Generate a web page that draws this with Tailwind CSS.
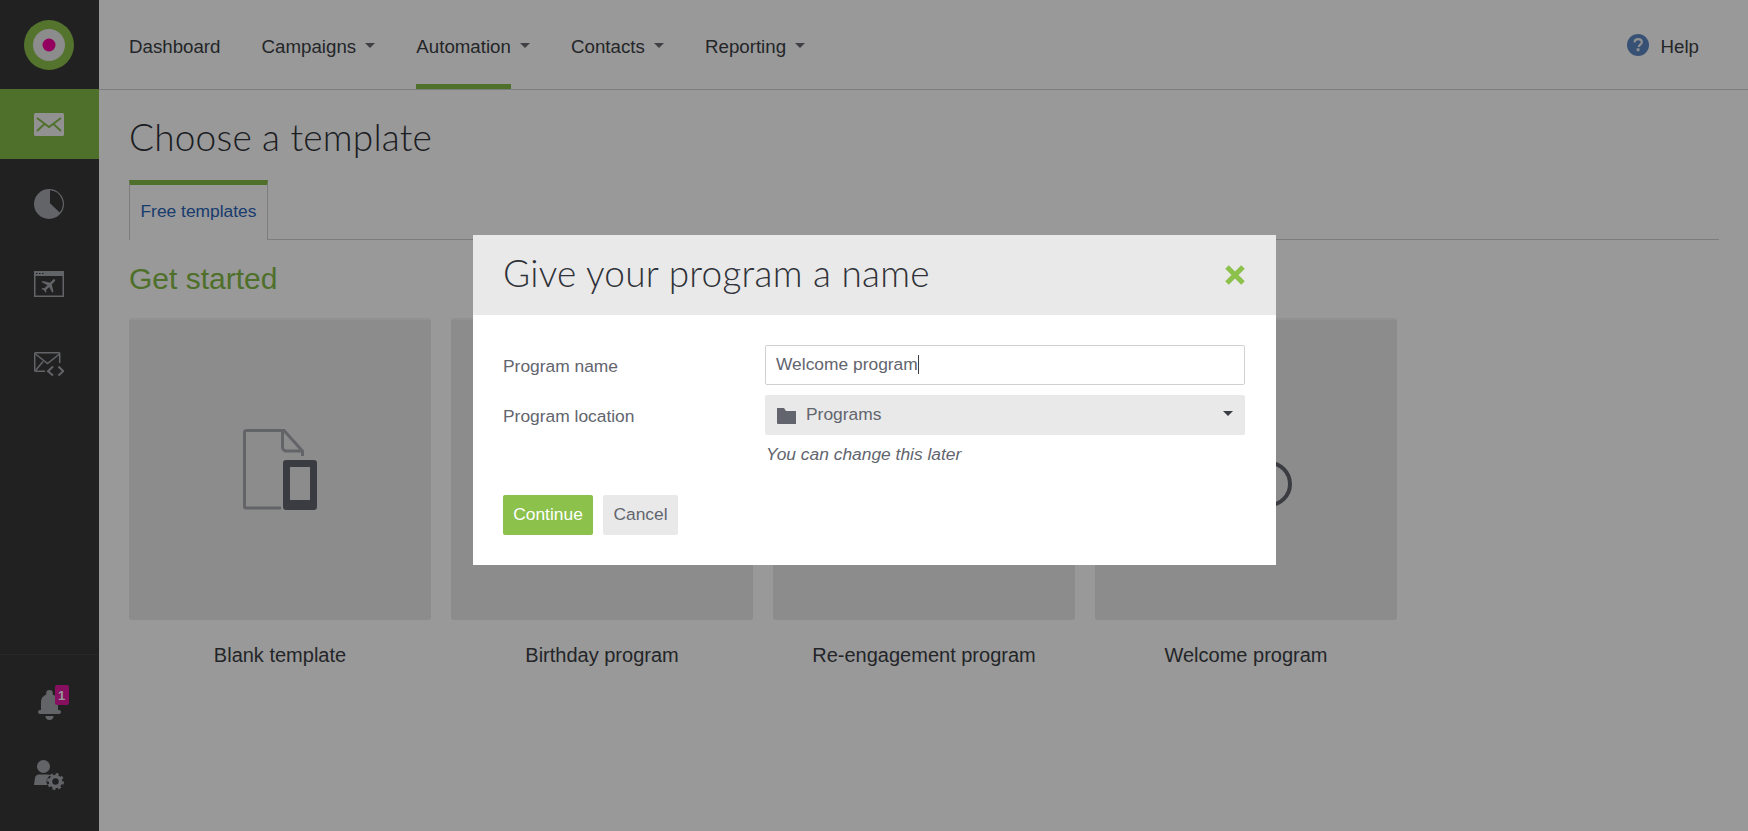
<!DOCTYPE html>
<html lang="en">
  <head>
    <meta charset="UTF-8" />
    <title>Choose a template</title>
    <script src="https://cdn.jsdelivr.net/npm/@tailwindcss/browser@4"></script>
  </head>
  <body class="h-[831px] overflow-hidden bg-white font-['Liberation_Sans',Arial,sans-serif] text-[#3b3e45]">
    <div class="flex h-[831px]">
      <!-- Sidebar -->
      <aside class="flex w-[99px] shrink-0 flex-col bg-[#383838] pr-px">
        <div class="flex h-[89px] items-center justify-center">
          <svg width="50" height="50" viewBox="0 0 50 50">
            <circle cx="25" cy="25" r="25" class="fill-[#8cc14c]" />
            <circle cx="25" cy="25" r="16" class="fill-[#e9e9e9]" />
            <circle cx="25" cy="25" r="6.500" class="fill-[#f500a0]" />
          </svg>
        </div>
        <div class="-mr-px flex h-[70px] items-center justify-center bg-[#84bb46] pr-px">
          <svg width="30" height="23" viewBox="0 0 30 23">
            <rect width="30" height="23" rx="1.500" fill="#f2f2f2" />
            <path d="M3 5l12 9 12-9M3 18l7.500-7M27 18l-7.500-7" fill="none" stroke="#84bb46" stroke-width="1.800" />
          </svg>
        </div>
        <div class="flex flex-col pt-[5px]">
          <div class="flex h-[80px] items-center justify-center">
            <svg width="30" height="30" viewBox="0 0 30 30">
              <circle cx="15" cy="15" r="15" fill="#a5a7ad" />
              <path d="M16 1.300A13.700 13.700 0 0 1 25.700 23.600L16 14.300z" fill="#383838" />
            </svg>
          </div>
          <div class="flex h-[80px] items-center justify-center">
            <svg width="30" height="26" viewBox="0 0 30 26" fill="none" stroke="#a5a7ad">
              <rect x=".75" y=".75" width="28.500" height="24.500" stroke-width="1.500" />
              <rect width="30" height="5" fill="#a5a7ad" stroke="none" />
              <path d="M2 2.500h1.500M5 2.500h1.500M8 2.500h1.500" stroke="#383838" stroke-width="1" />
              <g transform="translate(5.900 4.900) scale(.8) rotate(45 12 12)">
                <path fill="#a5a7ad" stroke="none" d="M21 16v-2l-8-5V3.500c0-.83-.67-1.500-1.500-1.500S10 2.670 10 3.500V9l-8 5v2l8-2.500V19l-2 1.500V22l3.500-1 3.500 1v-1.500L13 19v-5.500l8 2.500z" />
              </g>
            </svg>
          </div>
          <div class="flex h-[80px] items-center justify-center">
            <svg width="30" height="24" viewBox="0 0 30 24" fill="none" stroke="#a5a7ad" stroke-width="1.500">
              <path d="M11 19.250H1.700a1 1 0 0 1-1-1V1.700a1 1 0 0 1 1-1h23a1 1 0 0 1 1 1V11" />
              <path d="M1.500 2l12 9.500 12-9.500M1.500 18.500L9 9.500" />
              <path d="M19 14.500l-5 4.700 5 4.300M24.500 14.500l4.700 4.700-4.700 4.300" stroke-width="2" />
            </svg>
          </div>
        </div>
        <div class="mt-auto flex h-[177px] flex-col items-center border-t border-[#434343] pt-[35px]">
          <div class="relative h-[30px] w-[23px]">
            <svg width="23" height="30" viewBox="0 0 23 30" class="absolute left-0 top-0">
              <circle cx="11.500" cy="3.300" r="3.300" fill="#a5a7ad" />
              <path fill="#a5a7ad" d="M3 21V12C3 7 7 4 11.500 4S20 7 20 12v9z" />
              <rect y="20" width="23" height="4" rx="2" fill="#a5a7ad" />
              <path fill="#a5a7ad" d="M7.500 26h8c0 2.500-1.500 4-4 4s-4-1.500-4-4z" />
            </svg>
            <span class="absolute left-[17px] top-[-5px] flex h-[20px] w-[14px] items-center justify-center rounded-[2px] bg-[#e01a9f] text-[13px] leading-none font-bold text-white">1</span>
          </div>
          <svg width="30" height="30" viewBox="0 0 30 30" class="mt-[40px]">
            <circle cx="9.500" cy="6.500" r="6.500" fill="#a5a7ad" />
            <path fill="#a5a7ad" d="M0 25l1-7c.3-2 2-3.500 4-3.500h9c1 0 1.800.3 2.500.8-2.500 1.500-4 3.500-4 6.200 0 1.300.3 2.500 1 3.500z" />
            <circle cx="21.500" cy="21.500" r="5" fill="none" stroke="#a5a7ad" stroke-width="3.600" />
            <circle cx="21.500" cy="21.500" r="7.300" fill="none" stroke="#a5a7ad" stroke-width="2.400" stroke-dasharray="2.870 2.860" />
          </svg>
        </div>
      </aside>

      <div class="min-w-0 flex-1">
        <!-- Top nav -->
        <header class="flex h-[90px] items-start justify-between border-b border-[#d1d1d1] pl-[30px] pr-[49px]">
          <nav class="flex gap-[41.2px] text-[18.700px] text-[#3b3e45]">
            <a class="flex h-[89px] items-center pt-[5px]">Dashboard</a>
            <a class="flex h-[89px] items-center gap-[9px] pt-[5px]">Campaigns <span class="-mt-[3px] h-0 w-0 border-x-[5px] border-t-[5px] border-x-transparent border-t-[#6a6c72]"></span></a>
            <a class="relative flex h-[89px] items-center gap-[9px] pt-[5px]">Automation <span class="-mt-[3px] h-0 w-0 border-x-[5px] border-t-[5px] border-x-transparent border-t-[#6a6c72]"></span>
              <span class="absolute bottom-0 left-0 right-[19px] h-[5px] bg-[#84bb46]"></span>
            </a>
            <a class="flex h-[89px] items-center gap-[9px] pt-[5px]">Contacts <span class="-mt-[3px] h-0 w-0 border-x-[5px] border-t-[5px] border-x-transparent border-t-[#6a6c72]"></span></a>
            <a class="flex h-[89px] items-center gap-[9px] pt-[5px]">Reporting <span class="-mt-[3px] h-0 w-0 border-x-[5px] border-t-[5px] border-x-transparent border-t-[#6a6c72]"></span></a>
          </nav>
          <div class="flex h-[89px] items-center gap-[12px] text-[18.700px]">
            <svg width="22" height="22" viewBox="0 0 23 23">
              <circle cx="11.500" cy="11.500" r="11.500" class="fill-[#5d88c4]" />
              <path d="M7.800 8.800c.2-2.200 1.800-3.400 3.900-3.400 2.200 0 3.800 1.300 3.800 3.100 0 2.700-3.200 2.600-3.200 5.200" fill="none" stroke="#f1f1f1" stroke-width="2.200" />
              <rect x="10.100" y="15" width="2.900" height="2.900" fill="#f1f1f1" />
            </svg>
            <span class="pt-[5px]">Help</span>
          </div>
        </header>

        <!-- Content -->
        <main class="pl-[30px] pr-[29px]">
          <h1 class="mt-[24px] h-[46px] font-['Lato',sans-serif] text-[37px] leading-[46px] font-light tracking-[.2px] text-[#2f3238]">Choose a template</h1>
          <div class="mt-[20px] flex h-[60px] border-b border-[#d1d1d1]">
            <div class="-mb-px flex h-[60px] w-[139px] items-center justify-center border-x border-t-[5px] border-x-[#d1d1d1] border-t-[#84bb46] bg-white pb-[3px] text-[17.400px] text-[#2b64b8]">Free templates</div>
          </div>
          <h2 class="mt-[21px] h-[36px] text-[30px] leading-[36px] text-[#84bb46]">Get started</h2>
          <div class="mt-[21px] flex gap-[20px]">
            <div class="w-[302px]">
              <div class="flex h-[302px] items-start justify-center rounded-[3px] border-t-2 border-[#f2f2f2] bg-[#e9e9e9] pt-[109px]">
                <svg width="75" height="81" viewBox="0 0 75 81" fill="none">
                  <path d="M38 79H3a1.500 1.500 0 0 1-1.500-1.500V3A1.500 1.500 0 0 1 3 1.500h38L59.500 22v5" stroke="#a5a7ad" stroke-width="3" />
                  <path d="M39.500 2v16a4 4 0 0 0 4 4h16" stroke="#a5a7ad" stroke-width="3" />
                  <rect x="40" y="31" width="34" height="50" rx="3" fill="#62656e" />
                  <rect x="47" y="38" width="20" height="33" fill="#e9e9e9" />
                </svg>
              </div>
              <p class="mt-[24px] text-center text-[20px] leading-[22px]">Blank template</p>
            </div>
            <div class="w-[302px]">
              <div class="h-[302px] rounded-[3px] border-t-2 border-[#f2f2f2] bg-[#e9e9e9]"></div>
              <p class="mt-[24px] text-center text-[20px] leading-[22px]">Birthday program</p>
            </div>
            <div class="w-[302px]">
              <div class="h-[302px] rounded-[3px] border-t-2 border-[#f2f2f2] bg-[#e9e9e9]"></div>
              <p class="mt-[24px] text-center text-[20px] leading-[22px]">Re-engagement program</p>
            </div>
            <div class="w-[302px]">
              <div class="relative h-[302px] overflow-hidden rounded-[3px] border-t-2 border-[#f2f2f2] bg-[#e9e9e9]">
                <span class="absolute left-[151px] top-[141px] size-[46px] rounded-full border-[4px] border-[#62656e]"></span>
              </div>
              <p class="mt-[24px] text-center text-[20px] leading-[22px]">Welcome program</p>
            </div>
          </div>
        </main>
      </div>
    </div>

    <!-- Modal overlay -->
    <div class="fixed inset-0 bg-black/40"></div>
    <div class="fixed left-[473px] top-[235px] w-[803px] bg-white">
      <div class="flex h-[80px] items-center justify-between bg-[#e9e9e9] px-[30px]">
        <h3 class="-mt-[5px] font-['Lato',sans-serif] text-[37px] font-light tracking-[.25px] text-[#2f3238]">Give your program a name</h3>
        <svg width="22" height="22" viewBox="0 0 22 22"><path d="M3 3l16 16M19 3L3 19" stroke="#8cc14c" stroke-width="5" /></svg>
      </div>
      <div class="h-[250px] pl-[30px] pr-[31px] pt-[30px] text-[#62656e]">
        <div class="flex h-[40px] items-center">
          <label class="w-[262px] pt-[3px] text-[17.400px]">Program name</label>
          <div class="flex h-[40px] flex-1 items-center rounded-[2px] border border-[#d1d1d1] pb-[2px] pl-[10px] text-[17.400px]">Welcome program<span class="h-[19px] w-px bg-[#3b3e45]"></span></div>
        </div>
        <div class="mt-[10px] flex h-[40px] items-center">
          <label class="w-[262px] pt-[3px] text-[17.400px]">Program location</label>
          <div class="flex h-[40px] flex-1 items-center rounded-[2px] bg-[#e9e9e9] px-[12px] text-[17.400px]">
            <svg width="19" height="17" viewBox="0 0 19 17" class="mr-[10px]"><path fill="#62656e" d="M0 1h7l2 3h10v13H1a1 1 0 0 1-1-1z" /></svg>
            <span class="-mt-[1px]">Programs</span>
            <span class="-mt-[4px] ml-auto h-0 w-0 border-x-[5px] border-t-[5px] border-x-transparent border-t-[#3b3e45]"></span>
          </div>
        </div>
        <p class="ml-[263px] mt-[9px] h-[20px] text-[17.400px] leading-[20px] italic">You can change this later</p>
        <div class="mt-[31px] flex gap-[10px]">
          <button class="h-[40px] w-[90px] rounded-[2px] bg-[#8cc14c] pb-[2px] text-[17.400px] text-white">Continue</button>
          <button class="h-[40px] w-[75px] rounded-[2px] bg-[#e9e9e9] pb-[2px] text-[17.400px] text-[#62656e]">Cancel</button>
        </div>
      </div>
    </div>
  </body>
</html>
